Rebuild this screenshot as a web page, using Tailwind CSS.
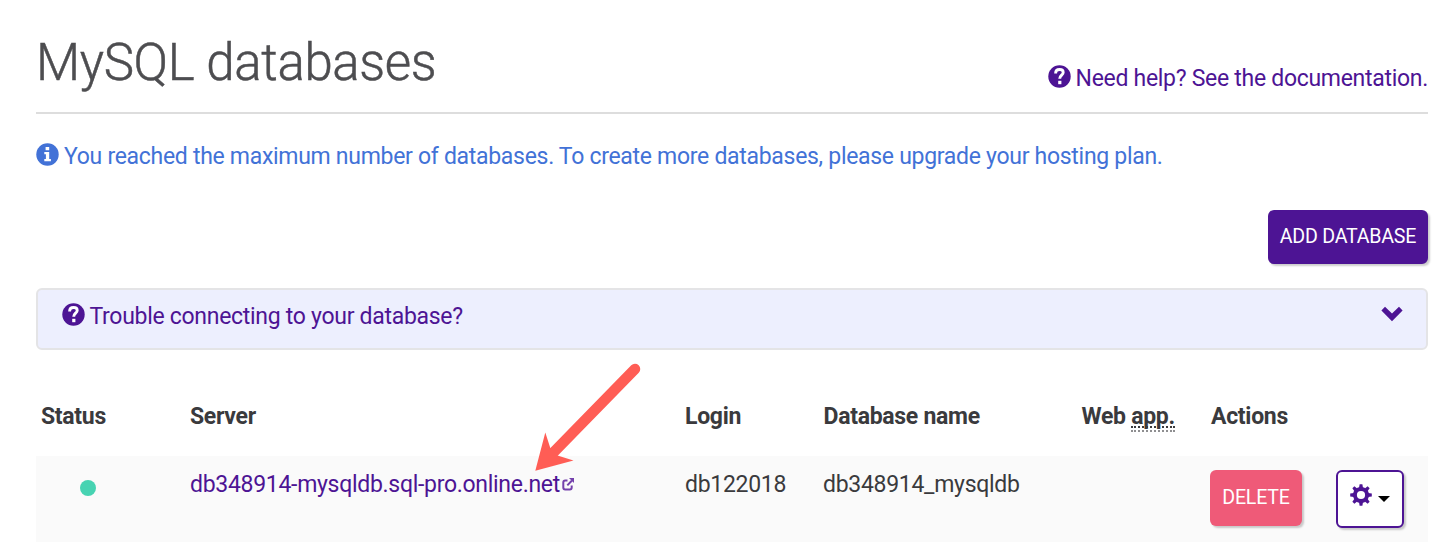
<!DOCTYPE html>
<html lang="en">
<head>
<meta charset="utf-8">
<title>MySQL databases</title>
<script src="https://cdn.jsdelivr.net/npm/@tailwindcss/browser@4"></script>
</head>
<body class="bg-white font-['Roboto',sans-serif] text-[23px] leading-[34px] tracking-[-0.295px] text-[#3a3a3d]">
<svg class="hidden">
  <symbol id="question" viewBox="0 0 23 23"><circle cx="11.5" cy="11.5" r="11.2" fill="currentColor"/><path d="M7.600 8.400C7.600 5.600 9.200 4.500 11.600 4.500c2.200 0 3.600 1.100 3.600 2.900 0 2.600-3.500 3-3.500 6.300" fill="none" stroke="#fff" stroke-width="2.900"/><rect x="10.200" y="15.800" width="3.200" height="3.400" fill="#fff"/></symbol>
</svg>
<main class="relative h-[560px] w-[1442px] overflow-hidden pl-9 pr-[14px]">
  <header class="flex h-[114px] items-start justify-between border-b-2 border-[#dddddd]">
    <h1 class="pt-[31px] text-[51px] leading-[64px] font-light tracking-[-0.35px] text-[#4d4d50] [-webkit-text-stroke:0.5px_#4d4d50]">MySQL databases</h1>
    <a class="flex items-start pt-[62px] text-[#4d1494]">
      <svg class="mt-[3px] mr-[5px] size-[23px]"><use href="#question"/></svg>
      <span>Need help? See the documentation.</span>
    </a>
  </header>
  <p class="flex items-start pt-[26px] text-[#4272d7]">
    <svg class="mt-[3px] mr-[5px] size-[23px]" viewBox="0 0 23 23"><circle cx="11.500" cy="11.500" r="11.200" fill="currentColor"/><path d="M9.600 4h3.600v3.200H9.600zM8.300 9h4.900v7h1.700v2.200H8.300V16h1.600v-4.800H8.300z" fill="#fff"/></svg>
    <span>You reached the maximum number of databases. To create more databases, please upgrade your hosting plan.</span>
  </p>
  <div class="mt-[36px] flex justify-end">
    <button class="h-[54px] w-[160px] rounded-md bg-[#4d1494] pb-px text-[19.6px] tracking-[-0.22px] text-white shadow-[2px_2px_2px_rgba(0,0,0,0.2)]">ADD DATABASE</button>
  </div>
  <section class="mt-6 flex h-[62px] items-start rounded-md border-2 border-[#e4e4e6] bg-[#edeffe] pt-[10px] pl-6 text-[#4d1494]">
    <svg class="mt-[3px] mr-[4.5px] size-[23px]"><use href="#question"/></svg>
    <span>Trouble connecting to your database?</span>
    <svg class="mt-[6px] mr-[23px] ml-auto h-[16px] w-[22px]" viewBox="0 0 22 16"><path d="M4 .8 11 7.500 18 .8l3.600 3.800L11 15.200.4 4.600z" fill="currentColor"/></svg>
  </section>
  <div class="mt-[50px] grid h-[56px] grid-cols-[149px_495px_138.5px_258px_129.5px_217px] pl-[5px] font-bold">
    <span>Status</span><span>Server</span><span>Login</span><span>Database name</span>
    <span>Web <abbr class="inline-block h-[32px] border-b-2 border-dotted border-[#8f8f91] no-underline"><span class="inline-block h-[28px] border-b-2 border-dotted border-[#3a3a3d]">app.</span></abbr></span>
    <span>Actions</span>
  </div>
  <div class="grid h-[86px] grid-cols-[154px_495px_138px_258px_129px_218px] items-start bg-[#fafafa] pt-3">
    <span class="mt-3 ml-11 size-4 rounded-full bg-[#47d3b2]"></span>
    <a class="flex text-[#4d1494]">db348914-mysqldb.sql-pro.online.net
      <svg class="mt-[9px] ml-[2.500px] h-[14px] w-[13px]" viewBox="0 0 13 14" fill="none" stroke="#7441ac" stroke-width="2"><path d="M5.500 3.500H3.200Q1.300 3.500 1.300 5.400V10.600Q1.300 12.500 3.200 12.500H7.800Q9.700 12.500 9.700 10.600V8.400M5.300 8.400 10 3.500"/><path d="M7 1h5v5z" fill="#7441ac" stroke="none"/></svg>
    </a>
    <span>db122018</span><span>db348914_mysqldb</span><span></span>
    <span class="mt-[2px] flex items-start gap-[34px]">
      <button class="h-14 w-[92px] rounded-md bg-[#ef5a78] text-[19.6px] tracking-[-0.22px] text-white shadow-[2px_2px_2px_rgba(0,0,0,0.2)]">DELETE</button>
      <button class="flex h-[58px] w-[68px] items-start rounded-md border-2 border-[#4d1494] bg-white pt-[12px] pl-[11.5px] shadow-[2px_2px_2px_rgba(0,0,0,0.2)]">
        <svg class="size-[22px]" viewBox="-11 -11 22 22"><g fill="#4d1494"><g id="teeth"><path id="tooth" d="M-2-7-1.400-10.800H1.400L2-7V7L1.400 10.800H-1.400L-2 7z"/><use href="#tooth" transform="rotate(90)"/></g><use href="#teeth" transform="rotate(45)"/><circle r="8"/></g><circle r="4.100" fill="#fff"/></svg>
        <svg class="mt-[12px] ml-[6.5px] h-[6px] w-3" viewBox="0 0 12 6"><path d="M0 0h12L6 6z"/></svg>
      </button>
    </span>
  </div>
  <svg class="absolute left-[530px] top-[360px] h-[115px] w-[115px]" viewBox="530 360 115 115"><path d="M635 369 550 456" stroke="#ff5d55" stroke-width="10.500" stroke-linecap="round"/><path d="M535.300 470.800 545.300 432.500 550.300 448 557.500 455.500 573.500 460.500z" fill="#ff5d55"/></svg>
</main>
</body>
</html>
